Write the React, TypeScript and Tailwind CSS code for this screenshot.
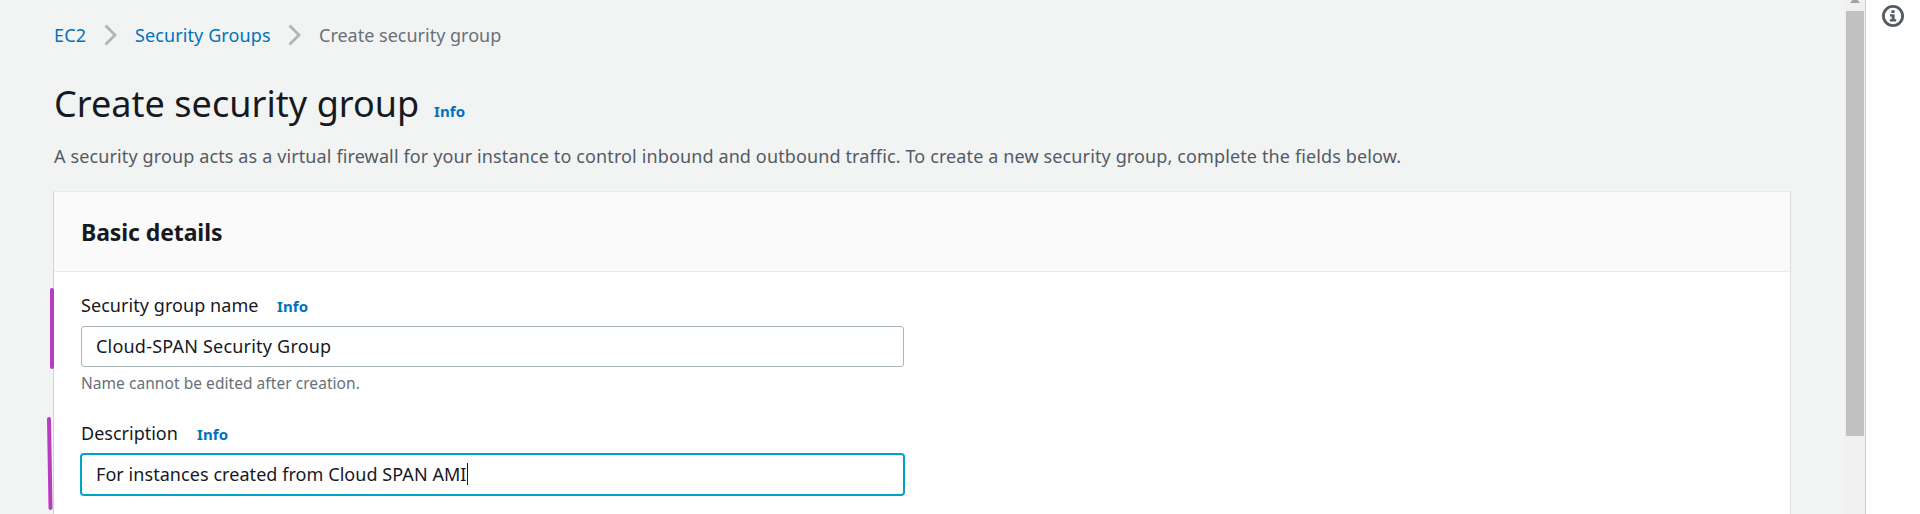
import React from "react";

function Chevron() {
  return (
    <svg width="14" height="22" viewBox="0 0 14 22" fill="none" stroke="#aab7b8" strokeWidth="2.8">
      <path d="M1.5 1.5 L11 11 L1.5 20.5" />
    </svg>
  );
}

function Info() {
  return <a className="text-[15px] leading-6 font-bold tracking-[0.1px] text-[#0073bb]">Info</a>;
}

function InfoIcon() {
  return (
    <svg width="24" height="24" viewBox="0 0 24 24" fill="none">
      <circle cx="12" cy="12" r="9.6" stroke="#545b64" strokeWidth="2.8" />
      <path d="M10.4 6.2h3.2v2.7h-3.2z M9 10.2h4.6v5h1.6v2.2H8.8v-2.2h1.8v-2.8H9z" fill="#545b64" />
    </svg>
  );
}

export default function App() {
  return (
    <div className="flex h-[514px] w-[1920px] overflow-hidden bg-white font-['Noto_Sans',sans-serif] text-[18px] leading-6 text-[#16191f]">
      <main className="h-full w-[1844px] shrink-0 bg-[#f2f4f4]">
        <nav className="flex items-center pt-[23px] pl-[54px]">
          <a className="w-[50px] tracking-[0.2px] text-[#0073bb]">EC2</a>
          <Chevron />
          <a className="ml-[17px] w-[153px] tracking-[0.1px] text-[#0073bb]">Security Groups</a>
          <Chevron />
          <span className="ml-[17px] text-[#687078]">Create security group</span>
        </nav>
        <div className="mt-[35px] flex h-11 items-baseline pl-[54px]">
          <h1 className="w-[380px] text-[36px] leading-[44px] tracking-[0.04px]">Create security group</h1>
          <Info />
        </div>
        <p className="mt-[18px] pl-[54px] tracking-[0.125px] whitespace-nowrap text-[#545b64]">
          A security group acts as a virtual firewall for your instance to control inbound and outbound traffic. To create a new security group, complete the fields below.
        </p>
        <section className="relative mt-[23px] ml-[53px] h-[400px] w-[1738px] border border-t-[#eaeded] border-r-[#dddfdf] border-l-[#d0d4d4] bg-white">
          <header className="flex h-20 items-center border-b border-[#eaeded] bg-[#fafafa] pl-[27px]">
            <h2 className="text-[23px] leading-8 font-bold tracking-[-0.1px]">Basic details</h2>
          </header>
          <div className="pt-[21px] pl-[27px]">
            <div className="flex h-6 items-baseline">
              <label className="w-[196px] tracking-[0.06px]">Security group name</label>
              <Info />
            </div>
            <div className="mt-[9px] flex h-[41px] w-[823px] items-center rounded-[3px] border border-[#aab7b8] bg-white pb-px pl-[14px] tracking-[0.21px]">
              Cloud-SPAN Security Group
            </div>
            <p className="mt-[6px] text-[15.5px] leading-5 tracking-[0.05px] text-[#687078]">Name cannot be edited after creation.</p>
            <div className="mt-7 flex h-6 items-baseline">
              <label className="w-[116px]">Description</label>
              <Info />
            </div>
            <div className="mt-[9px] flex h-[41px] w-[823px] items-center rounded-[3px] border border-[#00a1c9] bg-white pb-px pl-[14px] tracking-[0.06px] ring-1 ring-[#00a1c9]">
              <span>For instances created from Cloud SPAN AMI</span>
              <span className="h-[22px] w-px bg-[#16191f]" />
            </div>
          </div>
          <svg className="absolute top-[90px] -left-[10px]" width="14" height="232" viewBox="0 0 14 232" fill="none" stroke="#b83bc0" strokeWidth="4" strokeLinecap="round">
            <path d="M8 8 L8 85" />
            <path d="M5 137 L6.5 226" />
          </svg>
        </section>
      </main>
      <div className="flex h-full w-[22px] shrink-0 flex-col border-r border-[#cfcfcf] bg-[#f0f0f0] pl-[2px]">
        <svg className="shrink-0" width="18" height="11" viewBox="0 0 18 11">
          <path d="M4 3 L9 -3 L14 3z" fill="#a3a3a3" />
        </svg>
        <div className="h-[425px] w-[18px] bg-[#c1c1c1]" />
      </div>
      <aside className="pt-1 pl-[15px]">
        <InfoIcon />
      </aside>
    </div>
  );
}
